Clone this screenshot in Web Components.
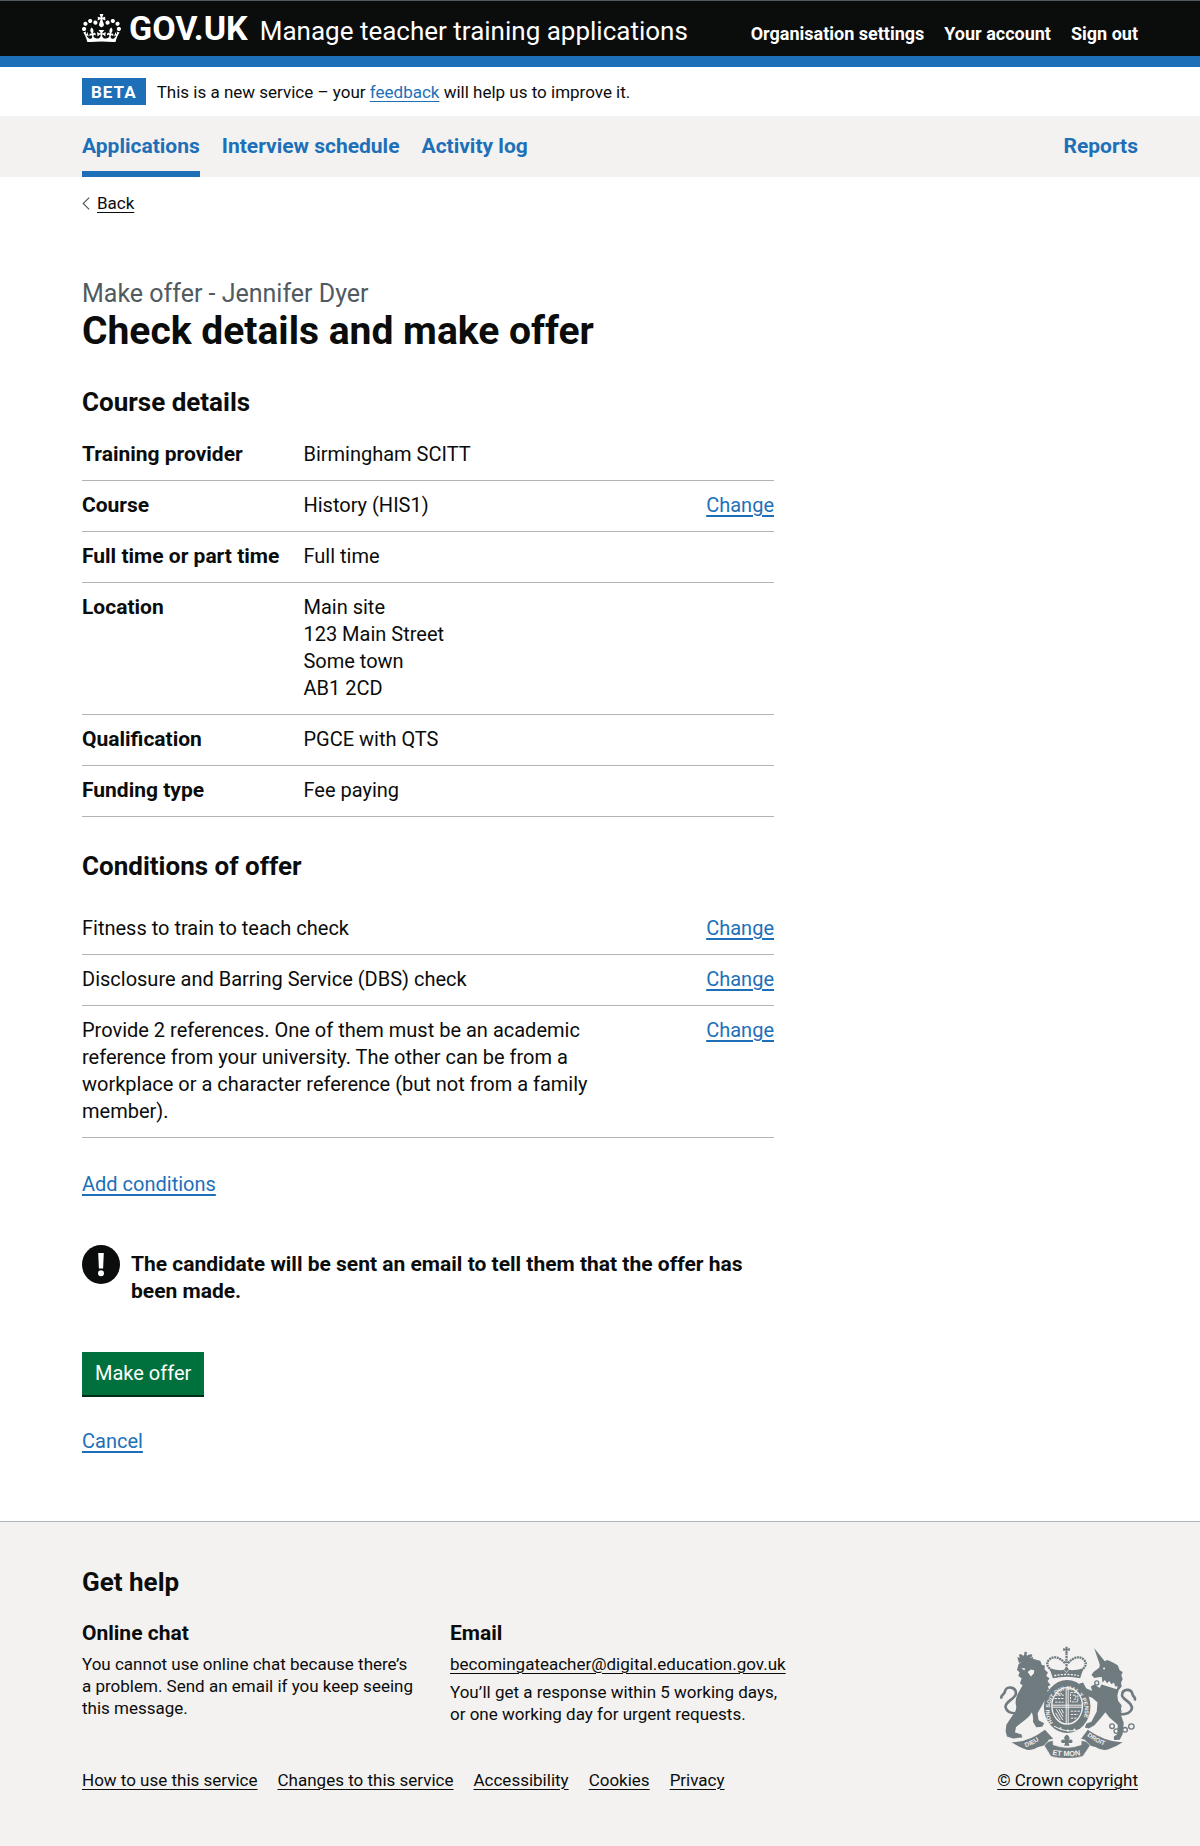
<!DOCTYPE html>
<html lang="en">
<head>
<meta charset="utf-8">
<meta name="viewport" content="width=device-width, initial-scale=1">
<title>Check details and make offer - Manage teacher training applications</title>
<style>
  :root {
    --text: #0b0c0c;
    --secondary: #505a5f;
    --brand: #1d70b8;
    --border: #b1b4b6;
    --panel: #f3f2f1;
    --gutter-left: 82px;
    --gutter-right: 62px;
  }
  body {
    margin: 0;
    min-height: 100vh;
    display: flex;
    flex-direction: column;
    background: #fff;
    color: var(--text);
    font: 400 20px/27px Roboto, "Liberation Sans", sans-serif;
  }
  main { padding: 13px var(--gutter-right) 66px var(--gutter-left) }
  service-footer { flex: 1 }
  .two-thirds { max-width: 692px; }
</style>
</head>
<body>
<service-header service="Manage teacher training applications">
  <nav-link tone="inverse" href="#organisation">Organisation settings</nav-link>
  <nav-link tone="inverse" href="#account">Your account</nav-link>
  <nav-link tone="inverse" href="#signout">Sign out</nav-link>
</service-header>
<phase-banner tag="BETA">This is a new service – your <text-link small href="#feedback">feedback</text-link> will help us to improve it.</phase-banner>
<primary-nav>
  <nav-link current href="#applications">Applications</nav-link>
  <nav-link href="#interviews">Interview schedule</nav-link>
  <nav-link href="#activity">Activity log</nav-link>
  <nav-link slot="end" href="#reports">Reports</nav-link>
</primary-nav>
<main>
  <back-link href="#back">Back</back-link>
  <div class="two-thirds">
    <page-heading caption="Make offer - Jennifer Dyer">Check details and make offer</page-heading>

    <summary-section heading="Course details">
      <summary-row><span slot="key">Training provider</span>Birmingham SCITT</summary-row>
      <summary-row><span slot="key">Course</span>History (HIS1)<text-link slot="action" href="#course">Change</text-link></summary-row>
      <summary-row><span slot="key">Full time or part time</span>Full time</summary-row>
      <summary-row><span slot="key">Location</span>Main site<br>123 Main Street<br>Some town<br>AB1 2CD</summary-row>
      <summary-row><span slot="key">Qualification</span>PGCE with QTS</summary-row>
      <summary-row><span slot="key">Funding type</span>Fee paying</summary-row>
    </summary-section>

    <summary-section spaced heading="Conditions of offer">
      <condition-row href="#fitness">Fitness to train to teach check</condition-row>
      <condition-row href="#dbs">Disclosure and Barring Service (DBS) check</condition-row>
      <condition-row href="#references">Provide 2 references. One of them must be an academic reference from your university. The other can be from a workplace or a character reference (but not from a family member).</condition-row>
    </summary-section>

    <offer-actions>
      <text-link slot="add" href="#add">Add conditions</text-link>
      <warning-text>The candidate will be sent an email to tell them that the offer has been made.</warning-text>
      <action-button slot="submit">Make offer</action-button>
      <text-link slot="submit" href="#cancel">Cancel</text-link>
    </offer-actions>
  </div>
</main>
<service-footer></service-footer>

<script>
const define = (name, css, html) => {
  const template = document.createElement('template');
  template.innerHTML = `<style>:host{display:block}*{box-sizing:border-box}${css}</style>`;
  customElements.define(name, class extends HTMLElement {
    constructor() {
      super();
      this.attachShadow({ mode: 'open' }).append(template.content.cloneNode(true));
    }
    connectedCallback() {
      if (this.ready) return;
      this.ready = true;
      const body = document.createElement('template');
      body.innerHTML = html(this);
      this.shadowRoot.append(body.content);
    }
  });
};

define('text-link', `
  :host { display: inline }
  a { color: var(--brand); text-decoration: underline 2px; text-underline-offset: 3px }
  :host([small]) a { text-decoration-thickness: 1px }
  :host([dark]) a { color: var(--text) }
`, el => `<a href="${el.getAttribute('href')}"><slot></slot></a>`);

define('nav-link', `
  a { display: block; color: var(--brand); font-size: 21px; font-weight: 700; text-decoration: none; padding: 17px 0; white-space: nowrap }
  :host([current]) a { border-bottom: 6px solid var(--brand); padding-bottom: 11px }
  :host([tone=inverse]) a { color: #fff; padding: 0; font-size: 18px; line-height: 22px }
`, el => `<a href="${el.getAttribute('href')}" ${el.hasAttribute('current') ? 'aria-current="page"' : ''}><slot></slot></a>`);

define('crown-logo', `
  :host { width: 39px }
  svg { display: block; width: 100%; fill: currentColor }
`, () => `<svg viewBox="0 0 132 97" aria-hidden="true"><path d="M25 30.2c3.5 1.5 7.7-.2 9.1-3.7 1.5-3.6-.2-7.8-3.9-9.2-3.6-1.4-7.6.3-9.1 3.9-1.4 3.5.3 7.5 3.9 9zM9 39.5c3.6 1.5 7.8-.2 9.2-3.7 1.5-3.6-.2-7.8-3.9-9.1-3.6-1.5-7.6.2-9.1 3.8-1.4 3.5.3 7.5 3.8 9zM4.4 57.2c3.5 1.5 7.7-.2 9.1-3.8 1.5-3.6-.2-7.7-3.9-9.1-3.5-1.5-7.6.3-9.1 3.8-1.4 3.5.3 7.6 3.9 9.1zm38.3-21.4c3.5 1.5 7.7-.2 9.1-3.8 1.5-3.6-.2-7.7-3.9-9.1-3.6-1.5-7.6.3-9.1 3.8-1.3 3.6.4 7.7 3.9 9.1zm64.4-5.6c-3.6 1.5-7.8-.2-9.1-3.7-1.5-3.6.2-7.8 3.8-9.2 3.6-1.4 7.7.3 9.2 3.9 1.3 3.5-.4 7.5-3.9 9zm15.9 9.3c-3.6 1.5-7.7-.2-9.1-3.7-1.5-3.6.2-7.8 3.7-9.1 3.6-1.5 7.7.2 9.2 3.8 1.5 3.5-.3 7.5-3.8 9zm4.7 17.7c-3.6 1.5-7.8-.2-9.2-3.8-1.5-3.6.2-7.7 3.9-9.1 3.6-1.5 7.7.3 9.2 3.8 1.3 3.5-.4 7.6-3.9 9.1zM89.3 35.8c-3.6 1.5-7.8-.2-9.2-3.8-1.4-3.6.2-7.7 3.9-9.1 3.6-1.5 7.7.3 9.2 3.8 1.4 3.6-.3 7.7-3.9 9.1zM69.7 17.7l8.9 4.7V9.3l-8.9 2.8c-.2-.3-.5-.6-.9-.9L72.4 0H59.6l3.5 11.2c-.3.3-.6.5-.9.9l-8.8-2.8v13.1l8.8-4.7c.3.3.6.7.9.9l-5 15.4v.1c-.2.8-.4 1.6-.4 2.4 0 4.1 3.1 7.5 7 8.1h.2c.3 0 .7.1 1 .1.4 0 .7 0 1-.1h.2c4-.6 7.1-4.1 7.1-8.1 0-.8-.1-1.7-.4-2.4V34l-5.1-15.4c.4-.2.7-.6 1-.9zM66 92.8c16.9 0 32.8 1.1 47.1 3.2 4-16.9 8.9-26.7 14-33.5l-9.6-3.4c1 4.9 1.1 7.2 0 10.2-1.5-1.4-3-4.3-4.2-8.7L108.6 76c2.8-2 5-3.2 7.5-3.3-4.4 9.4-10 11.9-13.6 11.2-4.3-.8-6.3-4.6-5.6-7.9 1-4.7 5.7-5.9 8-.5 4.3-8.7-3-11.4-7.6-8.8 7.1-7.2 7.9-13.5 2.1-21.1-8 6.1-8.1 12.3-4.5 20.8-4.7-5.4-12.1-2.5-9.5 6.2 3.4-5.2 7.9-2 7.2 3.1-.6 4.3-6.4 7.8-13.5 7.2-10.3-.9-10.9-8-11.2-13.8 2.5-.5 7.1 1.8 11 7.3L80.2 60c-4.1 4.4-8 5.3-12.3 5.4 1.4-4.4 8-11.6 8-11.6H55.5s6.4 7.2 7.9 11.6c-4.2-.1-8-1-12.3-5.4l1.4 16.4c3.9-5.5 8.5-7.7 10.9-7.3-.3 5.8-.9 12.8-11.1 13.8-7.2.6-12.9-2.9-13.5-7.2-.7-5 3.8-8.3 7.1-3.1 2.7-8.7-4.6-11.6-9.4-6.2 3.7-8.5 3.6-14.7-4.6-20.8-5.8 7.6-5 13.9 2.2 21.1-4.7-2.6-11.9.1-7.7 8.8 2.3-5.5 7.1-4.2 8.1.5.7 3.3-1.3 7.1-5.7 7.9-3.5.7-9-1.8-13.5-11.2 2.5.1 4.7 1.3 7.5 3.3l-4.7-15.4c-1.2 4.4-2.7 7.2-4.3 8.7-1.1-3-.9-5.3 0-10.2l-9.5 3.4c5 6.9 9.9 16.7 14 33.5 14.8-2.1 30.8-3.2 47.7-3.2z"/></svg>`);

define('service-header', `
  header { display: flex; align-items: baseline; justify-content: space-between; gap: 20px; background: #0b0c0c; color: #fff;
    border-top: 1px solid #505a5f; border-bottom: 11px solid var(--brand); padding: 11px var(--gutter-right) 9px var(--gutter-left) }
  .brand { display: flex; align-items: baseline; gap: 12px }
  a { color: #fff; text-decoration: none }
  .logo { display: flex; align-items: center; gap: 8px; font-weight: 700; font-size: 34px; line-height: 32px }
  .logo span { align-self: baseline }
  .name { font-size: 26px; line-height: 32px }
  nav { display: flex; gap: 20px }
`, el => `<header><div class="brand"><a class="logo" href="#home"><crown-logo></crown-logo><span>GOV.UK</span></a><a class="name" href="#service">${el.getAttribute('service')}</a></div><nav aria-label="Account"><slot></slot></nav></header>`);

define('phase-banner', `
  :host { padding: 11px var(--gutter-right) 11px var(--gutter-left) }
  .row { display: flex; align-items: center; gap: 11px; font-size: 17px; line-height: 22px }
  strong { background: var(--brand); color: #fff; padding: 3px 9px 2px; font-size: 17px; letter-spacing: 1px }
`, el => `<div class="row"><strong>${el.getAttribute('tag')}</strong><span><slot></slot></span></div>`);

define('primary-nav', `
  :host { background: var(--panel); padding: 0 var(--gutter-right) 0 var(--gutter-left) }
  nav, .start { display: flex; gap: 22px }
  nav { justify-content: space-between }
`, () => `<nav aria-label="Primary"><div class="start"><slot></slot></div><slot name="end"></slot></nav>`);

define('back-link', `
  a { display: inline-flex; align-items: center; gap: 7px; color: var(--text); font-size: 17px; line-height: 27px; text-decoration: none }
  span { text-decoration: underline 1px; text-underline-offset: 3px }
  svg { width: 8px; height: 13px; fill: none; stroke: #505a5f; stroke-width: 1.2 }
`, el => `<a href="${el.getAttribute('href')}"><svg viewBox="0 0 8 13" aria-hidden="true"><path d="M7.2.6 1.2 6.5l6 5.9"/></svg><span><slot></slot></span></a>`);

define('page-heading', `
  :host { margin: 60px 0 33px }
  .caption { display: block; color: var(--secondary); font-size: 25px; line-height: 33px }
  h1 { margin: 0; font-size: 39px; line-height: 43px; font-weight: 700 }
`, el => `<span class="caption">${el.getAttribute('caption')}</span><h1><slot></slot></h1>`);

define('summary-section', `
  :host { margin-bottom: 33px }
  h2 { margin: 0 0 11px; font-size: 26px; line-height: 33px; font-weight: 700 }
  :host([spaced]) h2 { margin-bottom: 21px }
`, el => `<h2>${el.getAttribute('heading')}</h2><slot></slot>`);

define('summary-row', `
  dl { display: grid; grid-template-columns: 32% 1fr auto; margin: 0; padding: 11px 0 12px; border-bottom: 1px solid var(--border) }
  dt { font-size: 21px; font-weight: 700; white-space: nowrap }
  dd { margin: 0 }
`, () => `<dl><dt><slot name="key"></slot></dt><dd><slot></slot></dd><dd><slot name="action"></slot></dd></dl>`);

define('condition-row', `
  div { display: flex; justify-content: space-between; padding: 11px 0 12px; border-bottom: 1px solid var(--border) }
  p { margin: 0; width: 76% }
`, el => `<div><p><slot></slot></p><text-link href="${el.getAttribute('href')}">Change</text-link></div>`);

define('offer-actions', `
  .stack, .submit { display: flex; flex-direction: column; align-items: flex-start }
  .stack { gap: 47px }
  .submit { gap: 33px }
`, () => `<div class="stack"><slot name="add"></slot><slot></slot><div class="submit"><slot name="submit"></slot></div></div>`);

define('warning-text', `
  div { display: flex; gap: 11px }
  svg { flex: none; width: 38px; height: 39px }
  strong { padding-top: 6px; font-size: 21px; font-weight: 700 }
`, () => `<div><svg viewBox="0 0 38 39" role="img" aria-label="Warning"><ellipse cx="19" cy="19.5" rx="19" ry="19.5" fill="#0b0c0c"/><path d="M16.2 8h5.6l-.7 15.6h-4.2z" fill="#fff"/><circle cx="19" cy="28.2" r="3" fill="#fff"/></svg><strong><slot></slot></strong></div>`);

define('action-button', `
  button { display: block; border: 0; margin: 0; background: #00703c; color: #fff; font: inherit; padding: 8px 13px; box-shadow: 0 2px 0 #002d18; cursor: pointer }
`, () => `<button type="submit"><slot></slot></button>`);

define('royal-arms', `
  :host { width: 138px }
  svg { display: block; width: 100% }
  text { font: 700 19px "Liberation Sans", sans-serif; fill: #f3f2f1 }
`, () => `<svg viewBox="80 50 415 338" aria-hidden="true">
  <g fill="#707b7f" stroke="none">
    <!-- supporter on the left: lion with its own crown -->
    <path d="M140 101q18-8 40 0l3-18-8 2-3-10-8 4-4-12-6 12-9-4-3 10-7-2z"/>
    <circle cx="160" cy="71" r="4"/><circle cx="144" cy="79" r="4"/><circle cx="176" cy="79" r="4"/>
    <path d="M139 104l-5 18 8 7-4 11 10 7-5 16 8 5-14 25q-11 21-5 39 0 16-12 28l-18 27-2 20 4 15 18 6 28-3-2-9-20-6 3-16 29-23q12-9 19-22 5 16 3 29l10 16 18-1 6-11-17-9-3-21 15-26 8-16 17 10 8-13-20-23 7-2-4-10 8-5-9-11 6-9-10-7 5-10-10-9 1-12-9-2-5-13-10-2q-15-8-45 5z"/>
    <path d="M166 128l10-7 10 2-1 9-9 10zM147 116l12 2-3 6z" fill="#f3f2f1"/>
    <!-- supporter on the right: unicorn -->
    <path d="M366 56l32 40 7-4 10 4 9 4 13 8 6 15 9 5-4 10 4 12-5 10 2 12-9 10-4 16 2 17 11 14-5 22 11 30-3 34-9 17-17 1-1-10 11-8 1-28-25-22-12-16-15 19-18 20-17 10-12-3 5-12 15-5 16-31 2-28-16-13-22-9-13-17-3-17 11-3 9 17 18 8-4-13 12-6 15 10 8-17-2-16-10 1-12 2-9-9 6-9 18-13 1-9z"/>
    <path d="M379 163l5-12 8 9 6-8 7 10 7-7 6 10 8-5 3 12 8-2-3 10z" fill="#f3f2f1"/>
    <circle cx="396" cy="118" r="3" fill="#f3f2f1"/>
  </g>
  <g fill="none" stroke="#707b7f" stroke-width="8" stroke-linecap="round">
    <path d="M134 252q-29 2-34-17c-5-18 31-26 31-43 0-19-29-24-33-6-2 12-12 10-11 19"/>
    <path d="M438 255q33 3 41-15c6-20-29-29-29-42 0-20 27-21 31-5 1 10 10 10 8 18"/>
    <g stroke-width="4"><circle cx="420" cy="291" r="7"/><circle cx="433" cy="306" r="7"/><circle cx="459" cy="302" r="7"/><circle cx="478" cy="292" r="8"/><circle cx="442" cy="246" r="5"/><circle cx="374" cy="161" r="6"/><circle cx="365" cy="174" r="4"/></g>
  </g>
  <!-- garter and quartered shield -->
  <ellipse cx="285" cy="232" rx="70" ry="80" fill="#707b7f"/>
  <ellipse cx="285" cy="230" rx="46" ry="55" fill="#707b7f" stroke="#f3f2f1" stroke-width="4"/>
  <g fill="none" stroke="#f3f2f1" stroke-width="3">
    <path d="M282 177v108M288 177v108M240 228h90M240 234h90"/>
    <path d="M249 198h26M247 208h29M249 219h25M254 190l5 8 6-8 6 8M295 190h22v28h-22zM302 198h9v12h-9M296 246h27M296 256h22M296 267h18" stroke-dasharray="7 3"/>
    <path d="M252 240l20 33M260 240l13 23M268 240l6 12M250 251l14 22"/>
  </g>
  <path id="garter" d="M245 285A53 62 0 1 1 325 285" fill="none"/>
  <text style="font-size:17px"><textPath href="#garter" startOffset="4">HONI SOIT QUI MAL Y PENSE</textPath></text>
  <path d="M245 291q42 26 92 6" fill="none" stroke="#f3f2f1" stroke-width="3"/>
  <circle cx="265" cy="297" r="3" fill="#f3f2f1"/><circle cx="287" cy="304" r="3" fill="#f3f2f1"/><circle cx="307" cy="301" r="3" fill="#f3f2f1"/>
  <!-- imperial crown -->
  <path d="M242 147l-10-30q40 12 51 1 12 11 51-1l-10 30q-39-9-82 0z" fill="#707b7f"/>
  <path d="M239 124q-22-17-9-32 21-20 49 10M327 124q22-17 9-32-21-20-49 10M283 72v44" fill="none" stroke="#707b7f" stroke-width="7" stroke-dasharray="6 2"/>
  <path d="M279 52h8l-2 6 8-2v9l-8-2 2 8h-8l2-8-8 2v-9l8 2z" fill="#707b7f"/>
  <path d="M283 110l8 10-8 10-8-10z" fill="#707b7f" stroke="#f3f2f1" stroke-width="2"/>
  <path d="M246 139q38-7 74 0" fill="none" stroke="#f3f2f1" stroke-width="4" stroke-dasharray="6 4"/>
  <!-- ribbon with the motto -->
  <g fill="#707b7f">
    <path d="M117 339q50 2 101-37l25 27-14 3q-4 18-31 22-23 15-43 5-21-8-38-20z"/>
    <path d="M453 339q-50 2-106-37l-20 27 12 3q4 18 31 22 23 15 43 5 23-8 40-20z"/>
    <path d="M216 350q10-17 27-15v12q42 16 84 0v-12q17-2 27 15l-22 32q-48 13-96 0z" stroke="#f3f2f1" stroke-width="2"/>
    <path d="M284 316q14 9 4 19 7-7 13-1 2 10-12 7l3 9h-16l3-9q-14 3-12-7 6-6 13 1-10-10 4-19z"/>
  </g>
  <path id="dieu" d="M160 354q32-9 58-34" fill="none"/><path id="droit" d="M345 320q30 25 72 36" fill="none"/><path id="etmon" d="M240 377q45 9 98-1" fill="none"/>
  <text><textPath href="#dieu">DIEU</textPath></text>
  <text><textPath href="#droit">DROIT</textPath></text>
  <text style="font-size:22px"><textPath href="#etmon">ET MON</textPath></text>
</svg>`);

define('service-footer', `
  :host { background: var(--panel); border-top: 1px solid var(--border); padding: 44px var(--gutter-right) 48px var(--gutter-left); font-size: 17px; line-height: 22px }
  footer, .links { display: flex }
  footer { align-items: flex-end; justify-content: space-between; gap: 20px }
  h2 { margin: 0 0 21px; font-size: 26px; line-height: 33px }
  h3 { margin: 0 0 6px; font-size: 21px; line-height: 27px }
  .help { display: grid; grid-template-columns: 336px 346px; gap: 32px; margin-bottom: 38px }
  .links { flex-wrap: wrap; gap: 20px }
  p { margin: 0 0 6px }
  .arms { display: flex; flex-direction: column; align-items: center; gap: 11px; white-space: nowrap }
`, () => `<footer><div><h2>Get help</h2>
  <div class="help">
    <section><h3>Online chat</h3><p>You cannot use online chat because there’s a problem. Send an email if you keep seeing this message.</p></section>
    <section><h3>Email</h3><p><text-link small dark href="mailto:becomingateacher@digital.education.gov.uk">becomingateacher@digital.education.gov.uk</text-link></p><p>You’ll get a response within 5 working days, or one working day for urgent requests.</p></section>
  </div>
  <nav class="links" aria-label="Support links">
    <text-link small dark href="#how">How to use this service</text-link><text-link small dark href="#changes">Changes to this service</text-link><text-link small dark href="#accessibility">Accessibility</text-link><text-link small dark href="#cookies">Cookies</text-link><text-link small dark href="#privacy">Privacy</text-link>
  </nav></div>
  <div class="arms"><royal-arms></royal-arms><text-link small dark href="#copyright">© Crown copyright</text-link></div></footer>`);
</script>
</body>
</html>
